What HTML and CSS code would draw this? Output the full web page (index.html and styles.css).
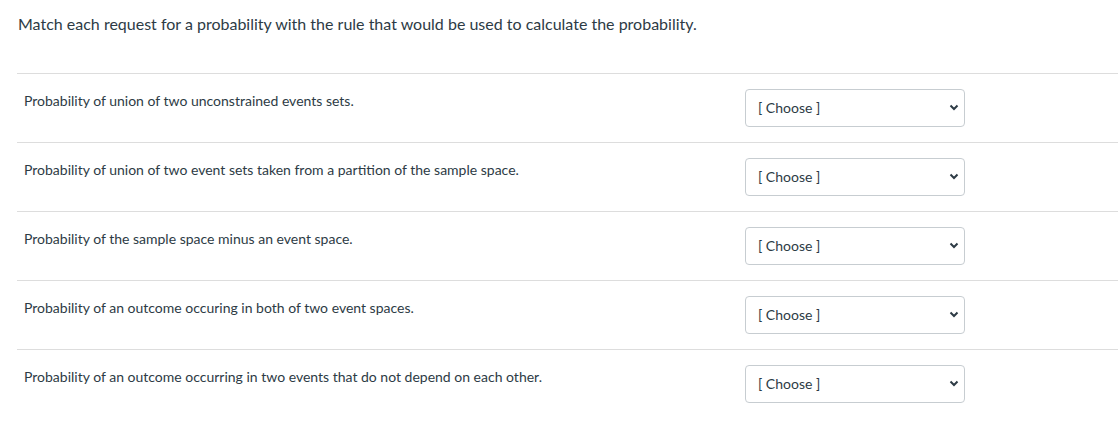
FILE: index.html
```html
<!DOCTYPE html>
<html>
<head>
<meta charset="utf-8">
<link rel="stylesheet" href="styles.css">
</head>
<body>
<div class="quiz">
  <p class="prompt">Match each request for a probability with the rule that would be used to calculate the probability.</p>
  <div class="answers">
    <div class="row">
      <div class="label">Probability of union of two unconstrained events sets.</div>
      <div class="select"><span>[ Choose ]</span><svg class="chev" width="10" height="7" viewBox="0 0 10 7"><path d="M1.5 1.5 L5 5 L8.5 1.5" fill="none" stroke="#2d3b45" stroke-width="2"/></svg></div>
    </div>
    <div class="row">
      <div class="label">Probability of union of two event sets taken from a partition of the sample space.</div>
      <div class="select"><span>[ Choose ]</span><svg class="chev" width="10" height="7" viewBox="0 0 10 7"><path d="M1.5 1.5 L5 5 L8.5 1.5" fill="none" stroke="#2d3b45" stroke-width="2"/></svg></div>
    </div>
    <div class="row">
      <div class="label">Probability of the sample space minus an event space.</div>
      <div class="select"><span>[ Choose ]</span><svg class="chev" width="10" height="7" viewBox="0 0 10 7"><path d="M1.5 1.5 L5 5 L8.5 1.5" fill="none" stroke="#2d3b45" stroke-width="2"/></svg></div>
    </div>
    <div class="row">
      <div class="label">Probability of an outcome occuring in both of two event spaces.</div>
      <div class="select"><span>[ Choose ]</span><svg class="chev" width="10" height="7" viewBox="0 0 10 7"><path d="M1.5 1.5 L5 5 L8.5 1.5" fill="none" stroke="#2d3b45" stroke-width="2"/></svg></div>
    </div>
    <div class="row">
      <div class="label">Probability of an outcome occurring in two events that do not depend on each other.</div>
      <div class="select"><span>[ Choose ]</span><svg class="chev" width="10" height="7" viewBox="0 0 10 7"><path d="M1.5 1.5 L5 5 L8.5 1.5" fill="none" stroke="#2d3b45" stroke-width="2"/></svg></div>
    </div>
  </div>
</div>
</body>
</html>
```
FILE: styles.css
```css
html, body {
  margin: 0;
  padding: 0;
  background: #fff;
}
body {
  font-family: Lato, "Liberation Sans", sans-serif;
  color: #2d3b45;
}
.quiz {
  padding-left: 17px;
}
.prompt {
  margin: 0;
  padding: 12px 0 0 1px;
  font-size: 16px;
  line-height: 24px;
}
.answers {
  margin-top: 37px;
}
.row {
  display: grid;
  grid-template-columns: 728px 220px;
  border-top: 1px solid #dddddd;
  padding: 15px 0;
}
.label {
  font-size: 14px;
  line-height: 21px;
  padding: 1px 0 0 7px;
}
.select {
  height: 38px;
  box-sizing: border-box;
  border: 1px solid #c7cdd1;
  border-radius: 4px;
  display: flex;
  align-items: center;
  justify-content: space-between;
  padding: 0 5px 2px 12px;
  font-size: 14px;
}
.chev {
  display: block;
}
```
